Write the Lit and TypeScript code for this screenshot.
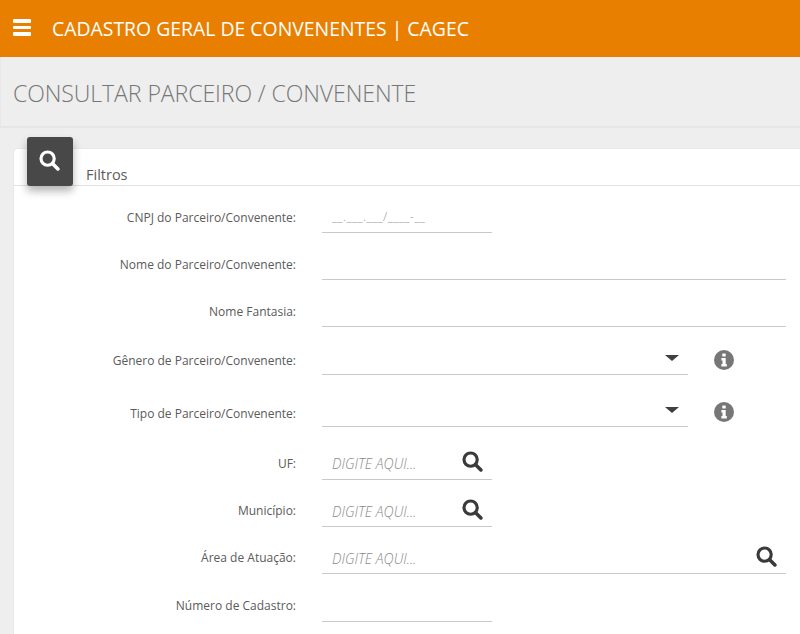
import { LitElement, html, css } from "lit";
import { customElement } from "lit/decorators.js";

const searchIcon = (size: number, color: string, cls = "") => html`<svg class=${cls} width=${size} height=${size} viewBox="0 0 20 20" aria-hidden="true">
  <circle cx="8.2" cy="8.2" r="6.3" fill="none" stroke=${color} stroke-width="3"></circle>
  <path d="M13 13 L18 18" fill="none" stroke=${color} stroke-width="3.4" stroke-linecap="round"></path>
</svg>`;

const infoIcon = html`<svg class="info" width="20" height="20" viewBox="0 0 20 20" aria-hidden="true">
  <circle cx="10" cy="10" r="10" fill="#777"></circle>
  <rect x="8.3" y="3.6" width="3.4" height="3" rx=".6" fill="#fff"></rect>
  <path d="M7.4 8h4.3v6h1.1v2.4H7.4V14h1.1v-3.6H7.4z" fill="#fff"></path>
</svg>`;

type Row = {
  label: string;
  kind: "text" | "mask" | "select" | "lookup";
  width: "s" | "m" | "l";
  tall?: boolean;
  lift?: string;
};

const rows: Row[] = [
  { label: "CNPJ do Parceiro/Convenente:", kind: "mask", width: "s" },
  { label: "Nome do Parceiro/Convenente:", kind: "text", width: "l" },
  { label: "Nome Fantasia:", kind: "text", width: "l" },
  { label: "Gênero de Parceiro/Convenente:", kind: "select", width: "m", lift: "low1" },
  { label: "Tipo de Parceiro/Convenente:", kind: "select", width: "m", tall: true, lift: "low2" },
  { label: "UF:", kind: "lookup", width: "s", tall: true, lift: "high1" },
  { label: "Município:", kind: "lookup", width: "s", lift: "high1" },
  { label: "Área de Atuação:", kind: "lookup", width: "l", lift: "high1" },
  { label: "Número de Cadastro:", kind: "text", width: "s", lift: "high1" },
];

@customElement("app-root")
export class AppRoot extends LitElement {
  static styles = css`
    :host {
      display: block;
      width: 800px;
      height: 634px;
      overflow: hidden;
      background: #eeeeee;
      font-family: "Open Sans", "Noto Sans", sans-serif;
      color: #555;
    }
    .top {
      height: 57px;
      background: #e97f00;
      display: flex;
      align-items: center;
      padding-left: 13px;
      gap: 21px;
      color: #fff;
    }
    .burger {
      width: 18px;
      display: flex;
      flex-direction: column;
      gap: 3px;
      margin-top: -2px;
    }
    .burger i {
      display: block;
      height: 3.4px;
      background: #fff;
      border-radius: 1px;
    }
    .brand {
      font-size: 19.4px;
      white-space: nowrap;
      margin-top: -1px;
    }
    .title {
      border-bottom: 2px solid #e6e6e6;
      display: flex;
      align-items: center;
      padding: 3px 0 0 13px;
      box-sizing: border-box;
      height: 71px;
      border-left: 1px solid #e8e8e8;
    }
    .title h1 {
      margin: 0 0 0 -1px;
      font-size: 23.1px;
      font-weight: 300;
      color: #777;
      letter-spacing: -0.1px;
      white-space: nowrap;
    }
    .card {
      position: relative;
      margin: 20px 0 0 13px;
      background: #fff;
      border-radius: 5px 0 0 0;
      border: 1px solid #e8e8e8;
      border-right: 0;
      height: 520px;
    }
    .badge {
      position: absolute;
      left: 13px;
      top: -12px;
      width: 46px;
      height: 49px;
      background: #484848;
      border-radius: 3px;
      box-shadow: 0 5px 9px rgba(0, 0, 0, 0.3);
      display: flex;
      align-items: center;
      justify-content: center;
    }
    .badge svg {
      margin: -3px 1px 0 0;
    }
    .legend {
      height: 36px;
      border-bottom: 1px solid #e2e2e2;
      padding-left: 72px;
      display: flex;
      align-items: flex-end;
      font-size: 14.5px;
      color: #5c5c5c;
      line-height: 20px;
    }
    .form {
      display: flex;
      flex-direction: column;
    }
    .row {
      display: grid;
      grid-template-columns: 282px 1fr;
      column-gap: 26px;
      height: 47.33px;
      align-items: end;
    }
    .row.tall {
      height: 52.5px;
    }
    .row:first-child {
      margin-top: -0.5px;
    }
    .lab {
      text-align: right;
      font-size: 12px;
      color: #5a5a5a;
      white-space: nowrap;
      line-height: 16px;
      padding-bottom: 7px;
    }
    .low1 .lab { padding-bottom: 6px; }
    .low2 .lab { padding-bottom: 5px; }
    .high1 .lab { padding-bottom: 8px; }
    .line {
      display: flex;
      align-items: center;
      height: 32px;
      border-bottom: 1px solid #c9c9c9;
      box-sizing: border-box;
      padding-left: 10px;
      position: relative;
    }
    .s { width: 170px; }
    .m { width: 366px; }
    .l { width: 464px; }
    .wrap {
      display: flex;
      align-items: flex-end;
    }
    .ph {
      font-size: 14px;
      font-style: italic;
      font-weight: 300;
      color: #8a8a8a;
      white-space: nowrap;
      flex: 1;
      padding-top: 1px;
    }
    .mask {
      font-size: 12.5px;
      font-weight: 300;
      color: #999;
      flex: 1;
      letter-spacing: 0.4px;
      padding-top: 1px;
    }
    .look {
      margin-right: 9px;
      margin-top: -3px;
    }
    .arrow {
      width: 0;
      height: 0;
      border-left: 7px solid transparent;
      border-right: 7px solid transparent;
      border-top: 6.5px solid #3f3f3f;
      position: absolute;
      right: 9px;
      top: 12px;
    }
    .info {
      margin-left: 26px;
      margin-bottom: 5px;
    }
  `;

  private renderField(r: Row) {
    if (r.kind === "mask") {
      return html`<div class="line s"><span class="mask">__.___.___/____-__</span></div>`;
    }
    if (r.kind === "text") {
      return html`<div class="line ${r.width}"></div>`;
    }
    if (r.kind === "select") {
      return html`<div class="wrap">
        <div class="line m"><span class="arrow"></span></div>
        ${infoIcon}
      </div>`;
    }
    return html`<div class="line ${r.width}">
      <span class="ph">DIGITE AQUI...</span>
      ${searchIcon(21, "#3a3a3a", "look")}
    </div>`;
  }

  render() {
    return html`
      <header class="top">
        <div class="burger"><i></i><i></i><i></i></div>
        <div class="brand">CADASTRO GERAL DE CONVENENTES | CAGEC</div>
      </header>
      <div class="title"><h1>CONSULTAR PARCEIRO / CONVENENTE</h1></div>
      <section class="card">
        <div class="badge">${searchIcon(21, "#ffffff")}</div>
        <div class="legend">Filtros</div>
        <div class="form">
          ${rows.map(
            (r) => html`<div class="row ${r.tall ? "tall" : ""} ${r.lift ?? ""}">
              <div class="lab">${r.label}</div>
              ${this.renderField(r)}
            </div>`
          )}
        </div>
      </section>
    `;
  }
}
